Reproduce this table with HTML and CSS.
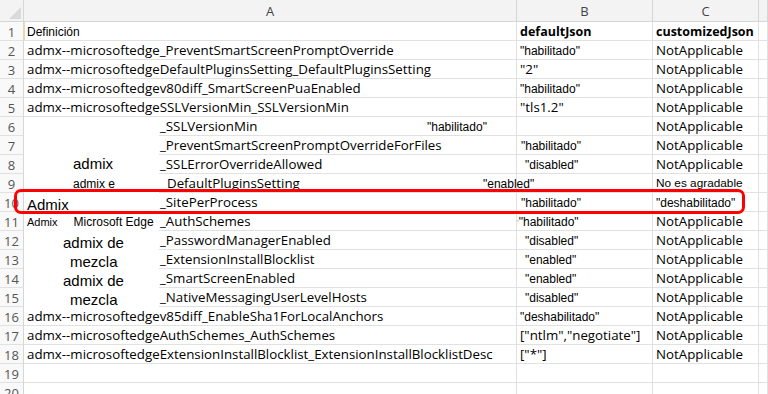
FILE: index.html
```
<!DOCTYPE html>
<html lang="es">
<head>
<meta charset="utf-8">
<title>Hoja</title>
<link rel="stylesheet" href="styles.css">
</head>
<body>
<div class="sheet">
  <div class="row head">
    <div class="rh corner"><span class="tri"></span></div>
    <div class="ch">A</div>
    <div class="ch">B</div>
    <div class="ch">C</div>
    <div class="ch"></div>
  </div>
  <div class="row">
    <div class="rh">1</div>
    <div class="cell a sel"><span class="ar12">Definición</span></div>
    <div class="cell b"><span class="bold">defaultJson</span></div>
    <div class="cell c"><span class="bold">customizedJson</span></div>
    <div class="cell d"></div>
  </div>
  <div class="row">
    <div class="rh">2</div>
    <div class="cell a"><span class="cal">admx--microsoftedge_PreventSmartScreenPromptOverride</span></div>
    <div class="cell b"><span class="ar12">"habilitado"</span></div>
    <div class="cell c"><span class="cal">NotApplicable</span></div>
    <div class="cell d"></div>
  </div>
  <div class="row">
    <div class="rh">3</div>
    <div class="cell a"><span class="cal">admx--microsoftedgeDefaultPluginsSetting_DefaultPluginsSetting</span></div>
    <div class="cell b"><span class="cal">"2"</span></div>
    <div class="cell c"><span class="cal">NotApplicable</span></div>
    <div class="cell d"></div>
  </div>
  <div class="row">
    <div class="rh">4</div>
    <div class="cell a"><span class="cal">admx--microsoftedgev80diff_SmartScreenPuaEnabled</span></div>
    <div class="cell b"><span class="ar12">"habilitado"</span></div>
    <div class="cell c"><span class="cal">NotApplicable</span></div>
    <div class="cell d"></div>
  </div>
  <div class="row">
    <div class="rh">5</div>
    <div class="cell a"><span class="cal">admx--microsoftedgeSSLVersionMin_SSLVersionMin</span></div>
    <div class="cell b"><span class="cal">"tls1.2"</span></div>
    <div class="cell c"><span class="cal">NotApplicable</span></div>
    <div class="cell d"></div>
  </div>
  <div class="row">
    <div class="rh">6</div>
    <div class="cell a split"><span class="lbl"></span><span class="main"><span class="cal w267">_SSLVersionMin</span><span class="ar12">"habilitado"</span></span></div>
    <div class="cell b"></div>
    <div class="cell c"><span class="cal">NotApplicable</span></div>
    <div class="cell d"></div>
  </div>
  <div class="row">
    <div class="rh">7</div>
    <div class="cell a split"><span class="lbl"></span><span class="main"><span class="cal">_PreventSmartScreenPromptOverrideForFiles</span></span></div>
    <div class="cell b"><span class="ar12 in1">"habilitado"</span></div>
    <div class="cell c"><span class="cal">NotApplicable</span></div>
    <div class="cell d"></div>
  </div>
  <div class="row">
    <div class="rh">8</div>
    <div class="cell a split"><span class="lbl"><span class="ar15 in46">admix</span></span><span class="main"><span class="cal">_SSLErrorOverrideAllowed</span></span></div>
    <div class="cell b"><span class="ar12 in5">"disabled"</span></div>
    <div class="cell c"><span class="cal">NotApplicable</span></div>
    <div class="cell d"></div>
  </div>
  <div class="row">
    <div class="rh">9</div>
    <div class="cell a split"><span class="lbl"><span class="ar12 in46">admix e</span></span><span class="main"><span class="cal w323">DefaultPluginsSetting</span><span class="ar12">"enabled"</span></span></div>
    <div class="cell b"></div>
    <div class="cell c"><span class="ar118">No es agradable</span></div>
    <div class="cell d"></div>
  </div>
  <div class="row">
    <div class="rh">10</div>
    <div class="cell a split"><span class="lbl"><span class="ar15 low">Admix</span></span><span class="main"><span class="cal">_SitePerProcess</span></span></div>
    <div class="cell b"><span class="ar12 in1">"habilitado"</span></div>
    <div class="cell c"><span class="ar12">"deshabilitado"</span></div>
    <div class="cell d"></div>
  </div>
  <div class="row">
    <div class="rh">11</div>
    <div class="cell a split"><span class="lbl"><span class="ar11">Admix</span><span class="ar12 in16">Microsoft Edge</span></span><span class="main"><span class="cal">_AuthSchemes</span></span></div>
    <div class="cell b"><span class="ar12 tick">"habilitado"</span></div>
    <div class="cell c"><span class="cal">NotApplicable</span></div>
    <div class="cell d"></div>
  </div>
  <div class="row">
    <div class="rh">12</div>
    <div class="cell a split"><span class="lbl"><span class="ar15 in36 low">admix de</span></span><span class="main"><span class="cal">_PasswordManagerEnabled</span></span></div>
    <div class="cell b"><span class="ar12 in5">"disabled"</span></div>
    <div class="cell c"><span class="cal">NotApplicable</span></div>
    <div class="cell d"></div>
  </div>
  <div class="row">
    <div class="rh">13</div>
    <div class="cell a split"><span class="lbl"><span class="ar15 in43 low">mezcla</span></span><span class="main"><span class="cal">_ExtensionInstallBlocklist</span></span></div>
    <div class="cell b"><span class="ar12 in5">"enabled"</span></div>
    <div class="cell c"><span class="cal">NotApplicable</span></div>
    <div class="cell d"></div>
  </div>
  <div class="row">
    <div class="rh">14</div>
    <div class="cell a split"><span class="lbl"><span class="ar15 in36 low">admix de</span></span><span class="main"><span class="cal">_SmartScreenEnabled</span></span></div>
    <div class="cell b"><span class="ar12 in5">"enabled"</span></div>
    <div class="cell c"><span class="cal">NotApplicable</span></div>
    <div class="cell d"></div>
  </div>
  <div class="row">
    <div class="rh">15</div>
    <div class="cell a split"><span class="lbl"><span class="ar15 in43 low">mezcla</span></span><span class="main"><span class="cal">_NativeMessagingUserLevelHosts</span></span></div>
    <div class="cell b"><span class="ar12 in5">"disabled"</span></div>
    <div class="cell c"><span class="cal">NotApplicable</span></div>
    <div class="cell d"></div>
  </div>
  <div class="row">
    <div class="rh">16</div>
    <div class="cell a"><span class="cal">admx--microsoftedgev85diff_EnableSha1ForLocalAnchors</span></div>
    <div class="cell b"><span class="ar12">"deshabilitado"</span></div>
    <div class="cell c"><span class="cal">NotApplicable</span></div>
    <div class="cell d"></div>
  </div>
  <div class="row">
    <div class="rh">17</div>
    <div class="cell a"><span class="cal">admx--microsoftedgeAuthSchemes_AuthSchemes</span></div>
    <div class="cell b"><span class="cal">["ntlm","negotiate"]</span></div>
    <div class="cell c"><span class="cal">NotApplicable</span></div>
    <div class="cell d"></div>
  </div>
  <div class="row">
    <div class="rh">18</div>
    <div class="cell a"><span class="cal">admx--microsoftedgeExtensionInstallBlocklist_ExtensionInstallBlocklistDesc</span></div>
    <div class="cell b"><span class="cal">["*"]</span></div>
    <div class="cell c"><span class="cal">NotApplicable</span></div>
    <div class="cell d"></div>
  </div>
  <div class="row">
    <div class="rh">19</div>
    <div class="cell a"></div>
    <div class="cell b"></div>
    <div class="cell c"></div>
    <div class="cell d"></div>
  </div>
  <div class="row">
    <div class="rh">20</div>
    <div class="cell a"></div>
    <div class="cell b"></div>
    <div class="cell c"></div>
    <div class="cell d"></div>
  </div>
</div>
<div class="highlight"></div>
</body>
</html>
```
FILE: styles.css
```
* { box-sizing: border-box; margin: 0; padding: 0; }
html, body { width: 768px; height: 394px; overflow: hidden; background: #fff; }
body { font-family: "Open Sans", "Noto Sans", sans-serif; color: #000; position: relative; }

.sheet { display: flex; flex-direction: column; }

.row {
  display: grid;
  grid-template-columns: 24px 493px 136px 106px 9px;
  height: 19px;
}
.row > div {
  border-right: 1px solid #e1e1e1;
  border-bottom: 1px solid #e1e1e1;
  display: flex;
  align-items: flex-end;
  white-space: nowrap;
  min-width: 0;
}
.row.head { height: 22px; }
.row.head > div {
  background: #f3f3f3;
  border-color: #d6d6d6;
  justify-content: center;
  align-items: center;
  font-size: 13px;
  color: #444;
  padding-top: 1px;
}
.corner { align-items: flex-end !important; justify-content: flex-end !important; padding: 0 2px 2px 0 !important; }
.tri {
  width: 0; height: 0;
  border-left: 12px solid transparent;
  border-bottom: 12px solid #dadada;
}

.rh {
  justify-content: center;
  font-size: 13px;
  color: #555;
  padding-bottom: 1px;
  line-height: 1;
  background: #f9f9f9;
  border-right-color: #d6d6d6 !important;
}

.cell { padding: 0 0 2px 3px; }
.cell.sel { box-shadow: inset 1px 0 0 #f3d9a0; }

.cal { font-family: "Open Sans", sans-serif; font-size: 13.3px; line-height: 1; display: block; }
.bold { font-family: "Open Sans", sans-serif; font-weight: 700; font-size: 12.5px; line-height: 1; display: block; }
.ar12 { font-family: "Liberation Sans", Arial, sans-serif; font-size: 12px; line-height: 1; display: block; }
.ar11 { font-family: "Liberation Sans", Arial, sans-serif; font-size: 11px; line-height: 1; display: block; }
.ar118 { font-family: "Liberation Sans", Arial, sans-serif; font-size: 11.8px; line-height: 1; display: block; }
.ar15 { font-family: "Liberation Sans", Arial, sans-serif; font-size: 15px; line-height: 1; display: block; }

.split {
  border-bottom: none !important;
  background: linear-gradient(#e1e1e1, #e1e1e1) no-repeat right bottom / 357px 1px;
  padding-bottom: 3px;
}
.lbl { flex: 0 0 133px; display: flex; align-items: flex-end; }
.main { display: flex; align-items: flex-end; }
.w267 { width: 267px; }
.w323 { width: 323px; padding-left: 7px; }

.in1 { padding-left: 1px; }
.in5 { padding-left: 5px; }
.in16 { padding-left: 16px; }
.in36 { padding-left: 36px; }
.in43 { padding-left: 43px; }
.in46 { padding-left: 46px; }
.low { margin-bottom: -3px; }
.tick::before { content: "'"; color: #9ab; font-size: 9px; margin-left: -3px; }

.highlight {
  position: absolute;
  left: 14px;
  top: 189px;
  width: 731px;
  height: 25px;
  border: 3px solid #ff0000;
  border-radius: 7px;
}
```
